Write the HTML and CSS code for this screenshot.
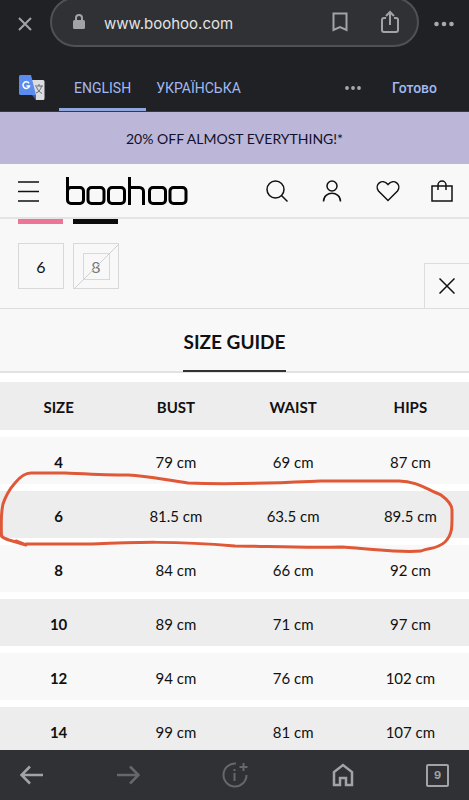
FILE: index.html
```html
<!DOCTYPE html>
<html lang="en">
<head>
<meta charset="utf-8">
<meta name="viewport" content="width=device-width, initial-scale=1">
<title>boohoo size guide</title>
<link rel="stylesheet" href="styles.css">
</head>
<body>
<header class="browser">
  <div class="address-row">
    <button class="icon-btn close-tab" aria-label="Close tab"><svg width="14" height="14" viewBox="0 0 14 14"><path d="M1 1 13 13M13 1 1 13"/></svg></button>
    <div class="address">
      <svg class="lock" width="12" height="16" viewBox="0 0 12 16"><rect x="0" y="6" width="12" height="9" rx="1.5" fill="#a2a3a7" stroke="none"/><path d="M3 7V4a3 3 0 0 1 6 0v3"/></svg>
      <a class="url" href="#">www.boohoo.com</a>
      <button class="icon-btn bookmark" aria-label="Bookmark"><svg width="16" height="20" viewBox="0 0 16 20"><path d="M1.500 1.500h13v16.500L8 15l-6.500 3z"/></svg></button>
      <button class="icon-btn" aria-label="Share"><svg width="20" height="24" viewBox="0 0 20 24"><path d="M6 8H4a2 2 0 0 0-2 2v10a2 2 0 0 0 2 2h12a2 2 0 0 0 2-2V10a2 2 0 0 0-2-2h-2M10 15V2M6 6l4-4 4 4"/></svg></button>
    </div>
    <button class="icon-btn more" aria-label="More"><svg width="20" height="6" viewBox="0 0 20 6"><g fill="#a8a9ad" stroke="none"><circle cx="2.500" cy="3" r="2.300"/><circle cx="10" cy="3" r="2.300"/><circle cx="17.500" cy="3" r="2.300"/></g></svg></button>
  </div>
  <nav class="translate">
    <svg class="translate-logo" width="26" height="26" viewBox="0 0 26 26"><path d="M11 5h13a1.500 1.500 0 0 1 1.500 1.500v17A1.500 1.500 0 0 1 24 25H17z" fill="#dcdde0" stroke="none"/><path d="M13 20h4v5z" fill="#3b63bf" stroke="none"/><path d="M1.500 0H12l5 20H1.500A1.500 1.500 0 0 1 0 18.500v-17A1.500 1.500 0 0 1 1.500 0z" fill="#5b8def" stroke="none"/><path d="M10 8.200A3.300 3.300 0 1 0 10.500 11H7.500" stroke="#fff" stroke-width="1.500"/><path class="thin" d="M16 11h8M20 9v2M22.500 11c-.5 3-2.500 6-5.500 7M17.500 12c1 3 3 5 5.500 6.500" stroke="#666a70"/></svg>
    <a class="lang active" href="#">ENGLISH</a>
    <a class="lang" href="#">УКРАЇНСЬКА</a>
    <button class="icon-btn options" aria-label="Translate options"><svg width="16" height="4" viewBox="0 0 16 4"><g fill="#a8a9ad" stroke="none"><circle cx="2" cy="2" r="1.900"/><circle cx="8" cy="2" r="1.900"/><circle cx="14" cy="2" r="1.900"/></g></svg></button>
    <button class="done">Готово</button>
  </nav>
</header>
<main class="page">
  <p class="promo">20% OFF ALMOST EVERYTHING!*</p>
  <header class="store">
    <button class="icon-btn menu" aria-label="Menu"><svg width="21" height="22" viewBox="0 0 21 22"><path d="M0 2h21M0 11.500h21M0 21h21"/></svg></button>
    <a class="logo" href="#" aria-label="boohoo"><svg width="124" height="30" viewBox="0 0 124 30">
      <rect x="2.500" y="11.500" width="16" height="16" rx="3.500"/><path d="M2.500 1v22"/>
      <rect x="23" y="11.500" width="16" height="16" rx="3.500"/>
      <rect x="43.500" y="11.500" width="16" height="16" rx="3.500"/>
      <path d="M64.500 1v28M64.500 11.500h10a4 4 0 0 1 4 4v13.500"/>
      <rect x="84.500" y="11.500" width="16" height="16" rx="3.500"/>
      <rect x="105" y="11.500" width="16" height="16" rx="3.500"/></svg></a>
    <button class="icon-btn" aria-label="Search"><svg width="22" height="22" viewBox="0 0 22 22"><circle cx="9.500" cy="9.500" r="8.500"/><path d="m15.500 15.500 6 6"/></svg></button>
    <button class="icon-btn" aria-label="Account"><svg width="22" height="22" viewBox="-1 0 22 22"><circle cx="10" cy="6" r="5"/><path d="M1.500 21.500c0-11 17-11 17 0"/></svg></button>
    <button class="icon-btn" aria-label="Wishlist"><svg width="24" height="22" viewBox="0 0 24 22"><path d="M12 20.500 2.500 11C-2 5 6-2.500 12 4.500 18-2.500 26 5 21.500 11z"/></svg></button>
    <button class="icon-btn" aria-label="Bag"><svg width="22" height="22" viewBox="0 0 22 22"><path d="M1 6h20v15H1zM7 10V5a4 4 0 0 1 8 0v5"/></svg></button>
  </header>
  <section class="product">
    <div class="swatches"><span class="swatch pink"></span><span class="swatch black"></span></div>
    <div class="sizes">
      <button class="size">6</button>
      <button class="size sold-out" disabled><span>8</span><svg width="45" height="45" viewBox="0 0 45 45"><path d="M0 45 45 0"/></svg></button>
    </div>
    <button class="close-panel" aria-label="Close size guide"><svg width="16" height="16" viewBox="0 0 16 16"><path d="m.5.5 15 15m0-15-15 15"/></svg></button>
  </section>
  <section class="guide">
    <div class="guide-head"><h1>SIZE GUIDE</h1></div>
    <div class="table-wrap">
      <table>
        <thead><tr><th>SIZE</th><th>BUST</th><th>WAIST</th><th>HIPS</th></tr></thead>
        <tbody>
          <tr><th>4</th><td>79 cm</td><td>69 cm</td><td>87 cm</td></tr>
          <tr><th>6</th><td>81.5 cm</td><td>63.5 cm</td><td>89.5 cm</td></tr>
          <tr><th>8</th><td>84 cm</td><td>66 cm</td><td>92 cm</td></tr>
          <tr><th>10</th><td>89 cm</td><td>71 cm</td><td>97 cm</td></tr>
          <tr><th>12</th><td>94 cm</td><td>76 cm</td><td>102 cm</td></tr>
          <tr><th>14</th><td>99 cm</td><td>81 cm</td><td>107 cm</td></tr>
        </tbody>
      </table>
      <svg class="marker" viewBox="0 0 469 90" preserveAspectRatio="none"><path d="M16 71 26 75 9 70Q3 68 1.500 66C1 54 1 43 3 34Q7 22 15 13 23 3 31 3H65C88 4 106 5 128 5 149 6 165 10 188 13 236 15 274 13 320 11H399C416 11 426 19 441 25Q452 33 452 40C452 56 453 64 445 72 436 80 430 77 421 81 401 83 384 80 342 77 296 78 264 76 235 76 174 71 137 72 92 74H26"/></svg>
    </div>
  </section>
</main>
<nav class="toolbar">
  <button class="icon-btn" aria-label="Back"><svg width="24" height="20" viewBox="0 0 24 20"><path d="M23 10H2M10 1.500 1.500 10l8.500 8.500"/></svg></button>
  <button class="icon-btn wide dim" aria-label="Forward"><svg width="24" height="20" viewBox="0 0 24 20"><path d="M1 10h21M14 1.500l8.500 8.500-8.500 8.500"/></svg></button>
  <button class="icon-btn wide dim info" aria-label="Page info"><svg width="26" height="26" viewBox="0 0 26 26"><path d="M14 1.500A11.500 11.500 0 1 0 24.500 13M12.500 11v8M12.500 7v2M21.500 1v8M17.500 5h8"/></svg></button>
  <button class="icon-btn wide" aria-label="Home"><svg width="22" height="24" viewBox="0 0 22 24"><path d="M2 22V9l9-7 9 7v13h-6v-7H8v7z"/></svg></button>
  <button class="tabs" aria-label="Open tabs">9</button>
</nav>
</body>
</html>
```
FILE: styles.css
```css
* { box-sizing: border-box; }
body {
  margin: 0;
  height: 100vh;
  display: flex;
  flex-direction: column;
  overflow: hidden;
  background: #fff;
  color: #111;
  font-family: Lato, "Liberation Sans", sans-serif;
}
button { padding: 0; border: 0; background: none; font: inherit; color: inherit; }
a { color: inherit; text-decoration: none; }
svg { display: block; fill: none; stroke: currentColor; }
.icon-btn { display: grid; place-items: center; flex: none; }

.browser {
  flex: none;
  background: #202124;
  color: #a2a3a7;
  font-family: Roboto, "Liberation Sans", sans-serif;
  border-bottom: 1px solid #38393c;
}
.browser svg { stroke-width: 2; }
.browser .thin { stroke-width: 1; }
.address-row { display: flex; align-items: center; height: 48px; padding: 0 15px 0 18px; }
.close-tab { margin-right: 18px; }
.address {
  flex: 1;
  display: flex;
  align-items: center;
  height: 50px;
  margin-top: -4px;
  padding: 0 17px 0 21px;
  border: 2px solid #505155;
  border-radius: 25px;
  background: #303134;
}
.url { flex: 1; margin-left: 19px; padding-top: 2px; font-size: 15px; color: #e2e3e5; font-family: Inter, sans-serif; }
.bookmark { margin-right: 32px; }
.more { margin-left: 15px; }
.translate { display: flex; align-items: center; height: 63px; padding: 0 32px 0 19px; font-size: 14px; }
.translate-logo { margin-right: 14px; margin-top: 17px; }
.lang { align-self: stretch; display: flex; align-items: center; padding-top: 20px; border-bottom: 3px solid transparent; color: #a3b9ef; }
.lang.active { padding: 20px 15px 0; border-color: #8fa9df; margin-right: 10px; }
.options { margin: 17px 31px 0 auto; }
.done { padding-top: 17px; color: #a3b9ef; font-weight: 500; }

.page { flex: 1; min-height: 0; overflow: hidden; }
.promo {
  margin: 0;
  height: 52px;
  line-height: 54px;
  text-align: center;
  font-size: 14px;
  background: #bcb6d8;
  color: #12102a;
}
.store {
  display: flex;
  align-items: center;
  gap: 33px;
  height: 55px;
  padding: 0 16px 0 17px;
  background: #f8f8f8;
  border-bottom: 2px solid #e4e4e4;
}
.store svg { stroke-width: 1.5; }
.store .icon-btn { width: 22px; }
.menu { margin-right: -7px; }
.logo { margin-right: auto; }
.store .logo svg { stroke-width: 3; color: #000; }
.product { position: relative; height: 90px; padding: 0 18px; background: #f8f8f8; border-bottom: 1px solid #ddd; }
.swatches, .sizes { display: flex; gap: 10px; }
.swatch { width: 45px; height: 5px; }
.pink { background: #ec7598; }
.black { background: #0c0c0c; }
.sizes { margin-top: 19px; gap: 9px; }
.size { position: relative; display: grid; place-items: center; width: 46px; height: 46px; border: 1px solid #d8d8d8; font-size: 16px; }
.sold-out span { display: grid; place-items: center; width: 27px; height: 27px; border: 1px solid #d8d8d8; color: #777; }
.sold-out svg { position: absolute; inset: 0; color: #d0d0d0; }
.close-panel {
  position: absolute;
  right: 0;
  bottom: 0;
  width: 45px;
  height: 45px;
  display: grid;
  place-items: center;
  border: solid #ddd;
  border-width: 1px 0 0 1px;
}
.close-panel svg { stroke-width: 1.5; }
.guide-head { display: flex; justify-content: center; height: 64px; background: #f8f8f8; border-bottom: 2px solid #e2e2e2; }
h1 { margin: 0; height: 63px; font-size: 19px; line-height: 65px; font-weight: 700; border-bottom: 2px solid #333; }
.table-wrap { position: relative; padding-top: 9px; }
table { width: 100%; table-layout: fixed; border-collapse: separate; border-spacing: 0; font-size: 15px; }
th, td { height: 54px; padding: 2px 0 0; border-bottom: 7px solid #fff; text-align: center; background: #f8f8f8; background-clip: padding-box; }
thead th { height: 55px; }
thead th, tbody tr:nth-child(even) > * { background-color: #ededed; }
.marker { position: absolute; left: 0; top: 97px; width: 100%; height: 90px; color: #df5837; stroke-width: 3; stroke-linecap: round; stroke-linejoin: round; pointer-events: none; }

.toolbar {
  flex: none;
  display: flex;
  align-items: center;
  justify-content: space-between;
  height: 50px;
  padding: 0 20px;
  background: #303134;
  color: #a2a3a7;
}
.toolbar svg { stroke-width: 2.5; }
.toolbar .info svg { stroke-width: 2; }
.wide { width: 48px; }
.dim { color: #66676b; }
.tabs { width: 23px; height: 23px; border: 2px solid #a2a3a7; border-radius: 2px; font: 700 11px Inter, sans-serif; }
```
